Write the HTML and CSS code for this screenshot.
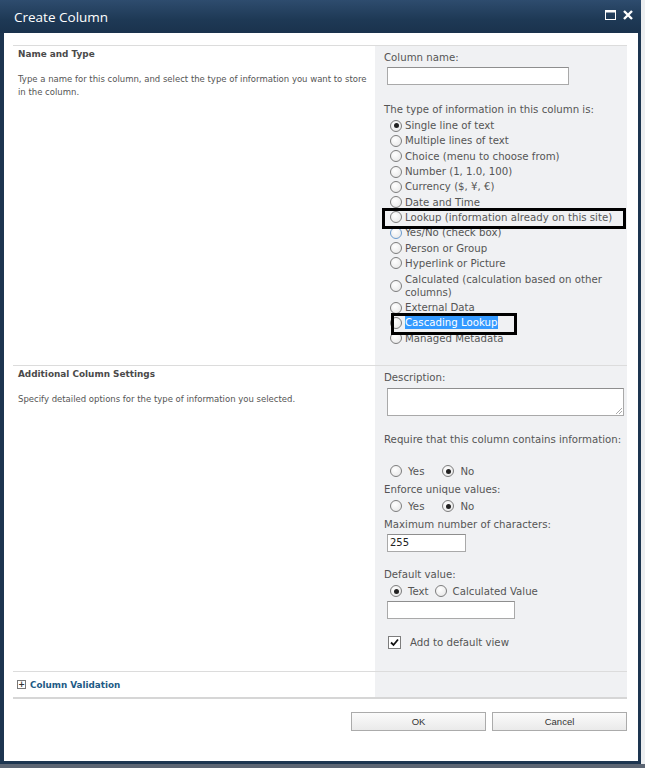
FILE: index.html
```html
<!DOCTYPE html>
<html>
  <head>
    <title>Create Column</title>
    <link rel="stylesheet" href="styles.css">
  </head>

  <body>
    <div class="dialog">
      <div class="titlebar">
        <span class="title">Create Column</span>
        <span class="controls">
          <svg width="11" height="10" viewBox="0 0 11 10">
            <rect x="0.5" y="0.5" width="10" height="9" fill="none" stroke="#fff" />
            <rect x="0.5" y="0.5" width="10" height="2" fill="#fff" />
          </svg>
          <svg width="10" height="10" viewBox="0 0 10 10">
            <path d="M1 1 L9 9 M9 1 L1 9" stroke="#fff" stroke-width="2.4" />
          </svg>
        </span>
      </div>

      <div class="content">
        <div class="section first">
          <div class="sec-left">
            <h3>Name and Type</h3>
            <p>Type a name for this column, and select the type of information you want to store in the column.</p>
          </div>
          <div class="sec-right">
            <div class="label">Column name:</div>
            <div class="textbox wide"></div>
            <div class="label type-label">The type of information in this column is:</div>
            <div class="radio-list">
              <div class="opt"><span class="radio checked"></span><span>Single line of text</span></div>
              <div class="opt"><span class="radio"></span><span>Multiple lines of text</span></div>
              <div class="opt"><span class="radio"></span><span>Choice (menu to choose from)</span></div>
              <div class="opt"><span class="radio"></span><span>Number (1, 1.0, 100)</span></div>
              <div class="opt"><span class="radio"></span><span>Currency ($, ¥, €)</span></div>
              <div class="opt"><span class="radio"></span><span>Date and Time</span></div>
              <div class="opt"><span class="radio"></span><span>Lookup (information already on this site)</span></div>
              <div class="opt"><span class="radio hover"></span><span>Yes/No (check box)</span></div>
              <div class="opt"><span class="radio"></span><span>Person or Group</span></div>
              <div class="opt"><span class="radio"></span><span>Hyperlink or Picture</span></div>
              <div class="opt two-line"><span class="radio"></span><span>Calculated (calculation based on other columns)</span></div>
              <div class="opt"><span class="radio"></span><span>External Data</span></div>
              <div class="opt"><span class="radio"></span><span class="selected">Cascading Lookup</span></div>
              <div class="opt"><span class="radio"></span><span>Managed Metadata</span></div>
            </div>
            <div class="mark mark-lookup"></div>
            <div class="mark mark-cascade"></div>
          </div>
        </div>

        <div class="section second">
          <div class="sec-left">
            <h3>Additional Column Settings</h3>
            <p>Specify detailed options for the type of information you selected.</p>
          </div>
          <div class="sec-right">
            <div class="label">Description:</div>
            <div class="textarea"></div>
            <div class="label require">Require that this column contains information:</div>
            <div class="yesno spaced">
              <span class="radio"></span><span>Yes</span>
              <span class="radio checked apart"></span><span>No</span>
            </div>
            <div class="label after-row">Enforce unique values:</div>
            <div class="yesno">
              <span class="radio"></span><span>Yes</span>
              <span class="radio checked apart"></span><span>No</span>
            </div>
            <div class="label after-row">Maximum number of characters:</div>
            <div class="textbox short">255</div>
            <div class="label default">Default value:</div>
            <div class="yesno">
              <span class="radio checked"></span><span>Text</span>
              <span class="radio near"></span><span>Calculated Value</span>
            </div>
            <div class="textbox medium"></div>
            <div class="check-row">
              <span class="checkbox">
                <svg width="9" height="9" viewBox="0 0 9 9">
                  <path d="M1 4.5 L3.5 7 L8 1.5" fill="none" stroke="#111" stroke-width="1.8" />
                </svg>
              </span>
              <span>Add to default view</span>
            </div>
          </div>
        </div>

        <div class="section validation">
          <div class="sec-left">
            <span class="expander">+</span>
            <span class="val-link">Column Validation</span>
          </div>
          <div class="sec-right"></div>
        </div>

        <div class="buttons">
          <button class="button">OK</button>
          <button class="button">Cancel</button>
        </div>
      </div>
    </div>
    <div class="bottom-strip"></div>
  </body>
</html>
```

FILE: styles.css
```css
body {
  margin: 0;
  background: #eceef0;
  font-family: "DejaVu Sans", Verdana, sans-serif;
  width: 645px;
  height: 768px;
  overflow: hidden;
}

.dialog {
  width: 641px;
  height: 764px;
  box-sizing: border-box;
  background: #1b3451;
  border-left: 4px solid #1d3550;
  border-right: 3px solid #1d3550;
  border-bottom: 3px solid #1d3550;
  display: flex;
  flex-direction: column;
}

.titlebar {
  height: 33px;
  display: flex;
  align-items: center;
  justify-content: space-between;
  padding: 0 8px 0 10px;
  background: linear-gradient(#2e4c6e, #1e3955 60%, #1a324d);
  margin-left: -4px;
  margin-right: -3px;
}

.title {
  color: #fff;
  font-family: "Open Sans", "Noto Sans", sans-serif;
  font-size: 13.5px;
  padding-left: 4px;
}

.controls {
  display: flex;
  gap: 7px;
  align-items: center;
  margin-top: -3px;
}

.content {
  flex: 1;
  background: #fff;
  padding: 12px 11px 0 9px;
}

.section {
  display: flex;
  border-top: 1px solid #dcdcdc;
}

.first {
  height: 319px;
}

.second {
  height: 305px;
}

.validation {
  height: 25px;
  border-bottom: 2px solid #d6d6d6;
}

.sec-left {
  flex: none;
  width: 362px;
  padding: 2px 0 0 5px;
  box-sizing: border-box;
  font-family: "DejaVu Sans", Tahoma, sans-serif;
  color: #444;
}

.sec-left h3 {
  margin: 0;
  font-size: 8.9px;
  font-weight: bold;
  color: #4a4a4a;
  line-height: 13px;
}

.sec-left p {
  margin: 12px 0 0;
  font-size: 8.5px;
  line-height: 13px;
  color: #555;
}

.sec-right {
  flex: 1;
  min-width: 0;
  position: relative;
  background: #f0f1f3;
  padding: 5px 0 0 9px;
  font-size: 10.2px;
  color: #555;
}

.label {
  line-height: 14px;
}

.textbox {
  border: 1px solid #a9a9a9;
  border-top-color: #8e8e8e;
  background: #fff;
  height: 16px;
  box-sizing: content-box;
  margin-left: 3px;
  font-size: 10px;
  line-height: 16px;
  padding-left: 2px;
  color: #222;
}

.wide {
  width: 178px;
  margin-top: 2px;
}

.short {
  width: 75px;
  margin-top: 2px;
}

.medium {
  width: 124px;
  margin-top: 1px;
}

.type-label {
  margin-top: 18px;
}

.radio-list {
  margin-top: 1px;
  padding-left: 6px;
}

.opt {
  display: flex;
  align-items: center;
  gap: 3px;
  line-height: 13px;
  min-height: 15.3px;
}

.opt span:last-child {
  width: 225px;
}

.two-line {
  padding: 2px 0 1px;
}

.radio {
  display: inline-block;
  flex: none;
  width: 10px;
  height: 10px;
  border: 1px solid #7d7d7d;
  border-radius: 50%;
  background: radial-gradient(circle at 40% 35%, #fff, #e4e4e4);
  position: relative;
}

.radio.hover {
  border-color: #6a9bd0;
}

.radio.checked::after {
  content: "";
  position: absolute;
  left: 2.5px;
  top: 2.5px;
  width: 5px;
  height: 5px;
  border-radius: 50%;
  background: #222;
}

.selected {
  background: #3399ff;
  color: #fff;
  flex: none;
  width: auto !important;
  padding-right: 1px;
}

.mark {
  position: absolute;
  border: 3px solid #000;
  box-sizing: border-box;
}

.mark-lookup {
  left: 7px;
  top: 162px;
  width: 244px;
  height: 21px;
}

.mark-cascade {
  left: 16px;
  top: 267px;
  width: 126px;
  height: 22px;
}

.textarea {
  width: 235px;
  height: 26px;
  margin: 3px 0 0 3px;
  border: 1px solid #a9a9a9;
  border-top-color: #8e8e8e;
  background: #fff;
  position: relative;
}

.textarea::after {
  content: "";
  position: absolute;
  right: 1px;
  bottom: 1px;
  width: 6px;
  height: 6px;
  background: linear-gradient(135deg, transparent 45%, #aaa 45%, #aaa 55%, transparent 55%, transparent 70%, #aaa 70%, #aaa 80%, transparent 80%);
}

.require {
  margin-top: 17px;
}

.yesno {
  display: flex;
  align-items: center;
  gap: 6px;
  padding-left: 6px;
  height: 18px;
}

.yesno .apart {
  margin-left: 12px;
}

.yesno .near {
  margin-left: 0;
}

.spaced {
  margin-top: 15px;
}

.after-row {
  margin-top: 3px;
}

.default {
  margin-top: 16px;
}

.check-row {
  display: flex;
  align-items: center;
  gap: 9px;
  margin: 16px 0 0 4px;
  height: 14px;
}

.checkbox {
  width: 11px;
  height: 11px;
  border: 1px solid #7d7d7d;
  background: #fff;
  display: flex;
  align-items: center;
  justify-content: center;
}

.validation .sec-left {
  display: flex;
  align-items: center;
  gap: 4px;
  padding: 0 0 0 4px;
}

.expander {
  width: 7px;
  height: 7px;
  border: 1px solid #777;
  font-size: 8px;
  line-height: 7px;
  text-align: center;
  color: #333;
  font-weight: bold;
}

.val-link {
  color: #1d5a85;
  font-weight: bold;
  font-size: 8.8px;
}

.buttons {
  display: flex;
  justify-content: flex-end;
  gap: 6px;
  margin-top: 13px;
}

.button {
  width: 135px;
  height: 19px;
  border: 1px solid #ababab;
  background: linear-gradient(#fbfbfb, #eaeaea);
  font-family: "Liberation Sans", Arial, sans-serif;
  font-size: 9.5px;
  color: #333;
  padding: 0;
}

.bottom-strip {
  height: 4px;
  width: 645px;
  background: #5c6573;
}
```
